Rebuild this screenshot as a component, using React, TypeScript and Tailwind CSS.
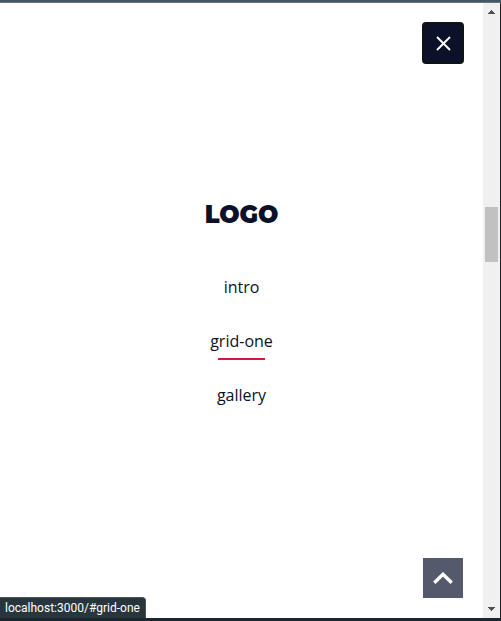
const links = [
  { label: 'intro', href: '#intro', active: false },
  { label: 'grid-one', href: '#grid-one', active: true },
  { label: 'gallery', href: '#gallery', active: false },
];

function CloseButton() {
  return (
    <button
      type="button"
      aria-label="Close menu"
      className="flex size-[42px] items-center justify-center rounded border-2 border-[#111111] bg-[#0a1128]"
    >
      <svg width="16" height="16" viewBox="0 0 16 16" fill="none" stroke="#ffffff" strokeWidth="1.9" aria-hidden="true">
        <path d="M2 2 15 15M15 2 2 15" />
      </svg>
    </button>
  );
}

function Menu() {
  return (
    <nav className="flex flex-col items-center pb-0.5">
      <a href="#home" className="mb-[27px] font-['Montserrat','Inter',sans-serif] text-2xl leading-9 font-black text-[#0a1128]">
        LOGO
      </a>
      {links.map((link) => (
        <a
          key={link.href}
          href={link.href}
          className="flex h-[54px] flex-col items-center gap-[5px] pt-[15px] text-base leading-6 text-[#0a1128]"
        >
          {link.label}
          {link.active && <span className="h-0.5 w-3/4 bg-[#dc143c]" />}
        </a>
      ))}
    </nav>
  );
}

function ScrollBar() {
  return (
    <div className="flex w-[17px] shrink-0 flex-col items-center justify-between bg-[#f0f0f0] py-[7px]">
      <svg width="7" height="4" viewBox="0 0 7 4" fill="#505050" shapeRendering="crispEdges" aria-hidden="true">
        <path d="M3 0h1v1h1v1h1v1h1v1H0V3h1V2h1V1h1z" />
      </svg>
      <div className="flex w-full flex-1 flex-col items-center">
        <div className="grow-193 basis-0" />
        <div className="h-[55px] w-[13px] bg-[#c1c1c1]" />
        <div className="grow-345 basis-0" />
      </div>
      <svg width="7" height="4" viewBox="0 0 7 4" fill="#505050" shapeRendering="crispEdges" aria-hidden="true">
        <path d="M0 0h7v1H6v1H5v1H4v1H3V3H2V2H1V1H0z" />
      </svg>
    </div>
  );
}

export default function App() {
  return (
    <div className="flex h-screen flex-col bg-white font-['Open_Sans',sans-serif]">
      <div className="h-[3px] shrink-0 border-b border-[#64777f] bg-[#455561]" />
      <div className="flex min-h-0 flex-1 border-r border-[#202124]">
        <main className="relative flex min-w-0 flex-1 items-center justify-center">
          <Menu />
          <div className="absolute top-[19px] right-[19px]">
            <CloseButton />
          </div>
          <button
            type="button"
            aria-label="Back to top"
            className="absolute right-5 bottom-5 flex size-10 items-center justify-center bg-[#545a6b]"
          >
            <svg width="20" height="12" viewBox="0 0 20 12" fill="none" stroke="#ffffff" strokeWidth="3.4" aria-hidden="true">
              <path d="M1.3 10.8 10 2.3 18.7 10.8" />
            </svg>
          </button>
          <div className="absolute bottom-0 left-0 rounded-tr border-t border-r border-[#46545b] bg-[#29353d] px-[5px] font-['Roboto',sans-serif] text-xs leading-5 text-white">
            localhost:3000/#grid-one
          </div>
        </main>
        <ScrollBar />
      </div>
      <div className="h-[3px] shrink-0 bg-[#1c262d]" />
    </div>
  );
}
